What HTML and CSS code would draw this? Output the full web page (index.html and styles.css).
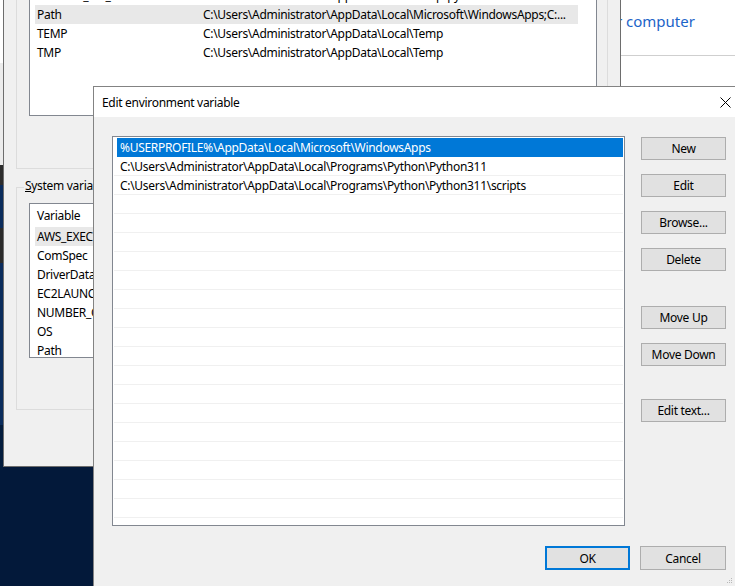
FILE: index.html
```html
<!DOCTYPE html>
<html>
<head>
<meta charset="utf-8">
<link rel="stylesheet" href="styles.css">
</head>
<body>
<div class="strip"></div>

<div class="sysprop">
  <div class="sp-head">
    <div class="sp-anchor"><span>your&nbsp;</span></div>
    <span class="sp-word">computer</span>
  </div>
</div>

<div class="envwin">
  <div class="grp grp-user">
    <div class="lv lv-user">
      <div class="lv-row"><span class="c1">OneDrive</span><span class="c2">C:\Users\Administrator\OneDrive</span></div>
      <div class="lv-row"><span class="c1">PYTHON_LIB_PATH</span><span class="c2">C:\Users\Administrator\AppData\Local\Temp\py</span></div>
      <div class="lv-row hl"><span class="c1">Path</span><span class="c2">C:\Users\Administrator\AppData\Local\Microsoft\WindowsApps;C:...</span></div>
      <div class="lv-row"><span class="c1">TEMP</span><span class="c2">C:\Users\Administrator\AppData\Local\Temp</span></div>
      <div class="lv-row"><span class="c1">TMP</span><span class="c2">C:\Users\Administrator\AppData\Local\Temp</span></div>
    </div>
  </div>
  <div class="grp grp-sys">
    <span class="grp-label"><u>S</u>ystem variables</span>
    <div class="lv lv-sys">
      <div class="lv-head">Variable</div>
      <div class="lv-row hl"><span class="c1">AWS_EXECUTION_ENV</span></div>
      <div class="lv-row"><span class="c1">ComSpec</span></div>
      <div class="lv-row"><span class="c1">DriverData</span></div>
      <div class="lv-row"><span class="c1">EC2LAUNCH_TELEMETRY</span></div>
      <div class="lv-row"><span class="c1">NUMBER_OF_PROCESSORS</span></div>
      <div class="lv-row"><span class="c1">OS</span></div>
      <div class="lv-row"><span class="c1">Path</span></div>
    </div>
  </div>
</div>

<div class="dlg">
  <div class="dlg-title">
    <span>Edit environment variable</span>
    <svg class="close" width="11" height="11" viewBox="0 0 11 11"><path d="M0.5 0.5 L10.5 10.5 M10.5 0.5 L0.5 10.5" stroke="#000" stroke-width="1" fill="none"/></svg>
  </div>
  <div class="dlg-main">
    <div class="list">
      <div class="row sel"><span class="selbar">%USERPROFILE%\AppData\Local\Microsoft\WindowsApps</span></div>
      <div class="row">C:\Users\Administrator\AppData\Local\Programs\Python\Python311</div>
      <div class="row">C:\Users\Administrator\AppData\Local\Programs\Python\Python311\scripts</div>
      <div class="row"></div><div class="row"></div><div class="row"></div><div class="row"></div>
      <div class="row"></div><div class="row"></div><div class="row"></div><div class="row"></div>
      <div class="row"></div><div class="row"></div><div class="row"></div><div class="row"></div>
      <div class="row"></div><div class="row"></div><div class="row"></div><div class="row"></div>
      <div class="row"></div><div class="row"></div>
    </div>
    <div class="btns">
      <div class="btn">New</div>
      <div class="btn">Edit</div>
      <div class="btn">Browse...</div>
      <div class="btn">Delete</div>
      <div class="btn gap-a">Move Up</div>
      <div class="btn">Move Down</div>
      <div class="btn gap-b">Edit text...</div>
    </div>
  </div>
  <div class="dlg-foot">
    <div class="btn fbtn ok">OK</div>
    <div class="btn fbtn cancel">Cancel</div>
  </div>
  <svg class="grip" width="6" height="6" viewBox="0 0 6 6"><rect x="4" y="0" width="1" height="1" fill="#b8b8b8"/><rect x="2" y="2" width="1" height="1" fill="#b8b8b8"/><rect x="4" y="2" width="1" height="1" fill="#b8b8b8"/><rect x="0" y="4" width="1" height="1" fill="#b8b8b8"/><rect x="2" y="4" width="1" height="1" fill="#b8b8b8"/><rect x="4" y="4" width="1" height="1" fill="#b8b8b8"/></svg>
</div>
</body>
</html>
```

FILE: styles.css
```css
* { box-sizing: border-box; margin: 0; padding: 0; }
html, body { width: 735px; height: 586px; overflow: hidden; }
body {
  font-family: "Noto Sans", "Segoe UI", sans-serif;
  font-size: 12px;
  letter-spacing: -0.3px;
  color: #000;
  background: #03193a;
  position: relative;
}

.strip {
  position: absolute; left: 0; top: 0; width: 3px; height: 470px;
  background: linear-gradient(to bottom, #ffffff 0, #ffffff 63px, #ececec 63px, #ececec 165px, #2d2d2d 165px, #2d2d2d 185px, #0b2c5c 185px, #0b2c5c 228px, #2a2a2a 228px, #2a2a2a 263px, #0b2c5c 263px, #0b2c5c 425px, #041d3d 425px);
}

/* system properties window behind */
.sysprop { position: absolute; left: 560px; top: 0; width: 175px; height: 100px; background: #fff; }
.sp-head { height: 56px; border-bottom: 1px solid #cfcfcf; display: flex; padding-top: 11px; font-size: 15px; letter-spacing: 0; color: #1c64c8; white-space: nowrap; line-height: 20px; }
.sp-anchor { width: 66px; flex: none; display: flex; justify-content: flex-end; }
.sp-anchor span { flex: none; }

/* environment variables window */
.envwin {
  position: absolute; left: 3px; top: 0; width: 618px; height: 467px;
  background: #f0f0f0; border: 1px solid #6d6d6d; border-top: none; overflow: hidden;
}
.grp { width: 592px; border: 1px solid #dcdcdc; }
.grp-user { margin: -40px 0 0 12px; height: 209px; padding: 5px 0 0 12px; }
.grp-sys { margin: 18px 0 0 12px; height: 223px; padding: 15px 0 0 12px; position: relative; }
.grp-label { position: absolute; left: 7px; top: -10px; padding: 0 1px; background: #f0f0f0; line-height: 16px; }
.lv { width: 568px; background: #fff; border: 1px solid #828790; overflow: hidden; }
.lv-user { height: 150px; }
.lv-sys { height: 155px; }
.lv-head { height: 23px; display: flex; align-items: center; padding-left: 7px; }
.lv-row { height: 19px; margin-left: 5px; width: 543px; display: flex; align-items: center; white-space: nowrap; overflow: hidden; }
.lv-row.hl { background: #e8e8e8; }
.c1 { width: 168px; flex: none; padding-left: 2px; overflow: hidden; }
.c2 { flex: none; }

/* edit dialog */
.dlg {
  position: absolute; left: 93px; top: 86px; width: 642px; height: 500px;
  border-top: 1px solid #838383; border-left: 1px solid #838383;
  background: #f0f0f0; display: flex; flex-direction: column;
}
.dlg-title { height: 30px; flex: none; background: #fff; display: flex; align-items: center; justify-content: space-between; padding: 0 4px 0 8px; }
.close { display: block; }
.dlg-main { display: flex; gap: 16px; padding: 19px 9px 0 18px; }
.list { width: 513px; height: 390px; flex: none; border: 1px solid #828790; background: #fff; padding: 1px; overflow: hidden; }
.row { height: 19px; border-bottom: 1px solid #f0f0f0; padding-left: 6px; display: flex; align-items: center; white-space: nowrap; }
.row.sel { border-bottom: none; padding-left: 3px; }
.selbar { flex: 1; align-self: stretch; display: flex; align-items: center; background: #0078d7; color: #fff; padding-left: 3px; }
.btns { width: 85px; flex: none; display: flex; flex-direction: column; gap: 14px; padding-top: 1px; }
.btn { height: 23px; background: #e1e1e1; border: 1px solid #adadad; display: flex; align-items: center; justify-content: center; white-space: nowrap; }
.gap-a { margin-top: 21px; }
.gap-b { margin-top: 19px; }
.dlg-foot { display: flex; justify-content: flex-end; gap: 10px; padding: 20px 9px 0 0; }
.fbtn { height: 24px; }
.ok { width: 85px; border: 2px solid #0078d7; }
.cancel { width: 86px; }
.grip { position: absolute; right: 2px; bottom: 2px; }
```
